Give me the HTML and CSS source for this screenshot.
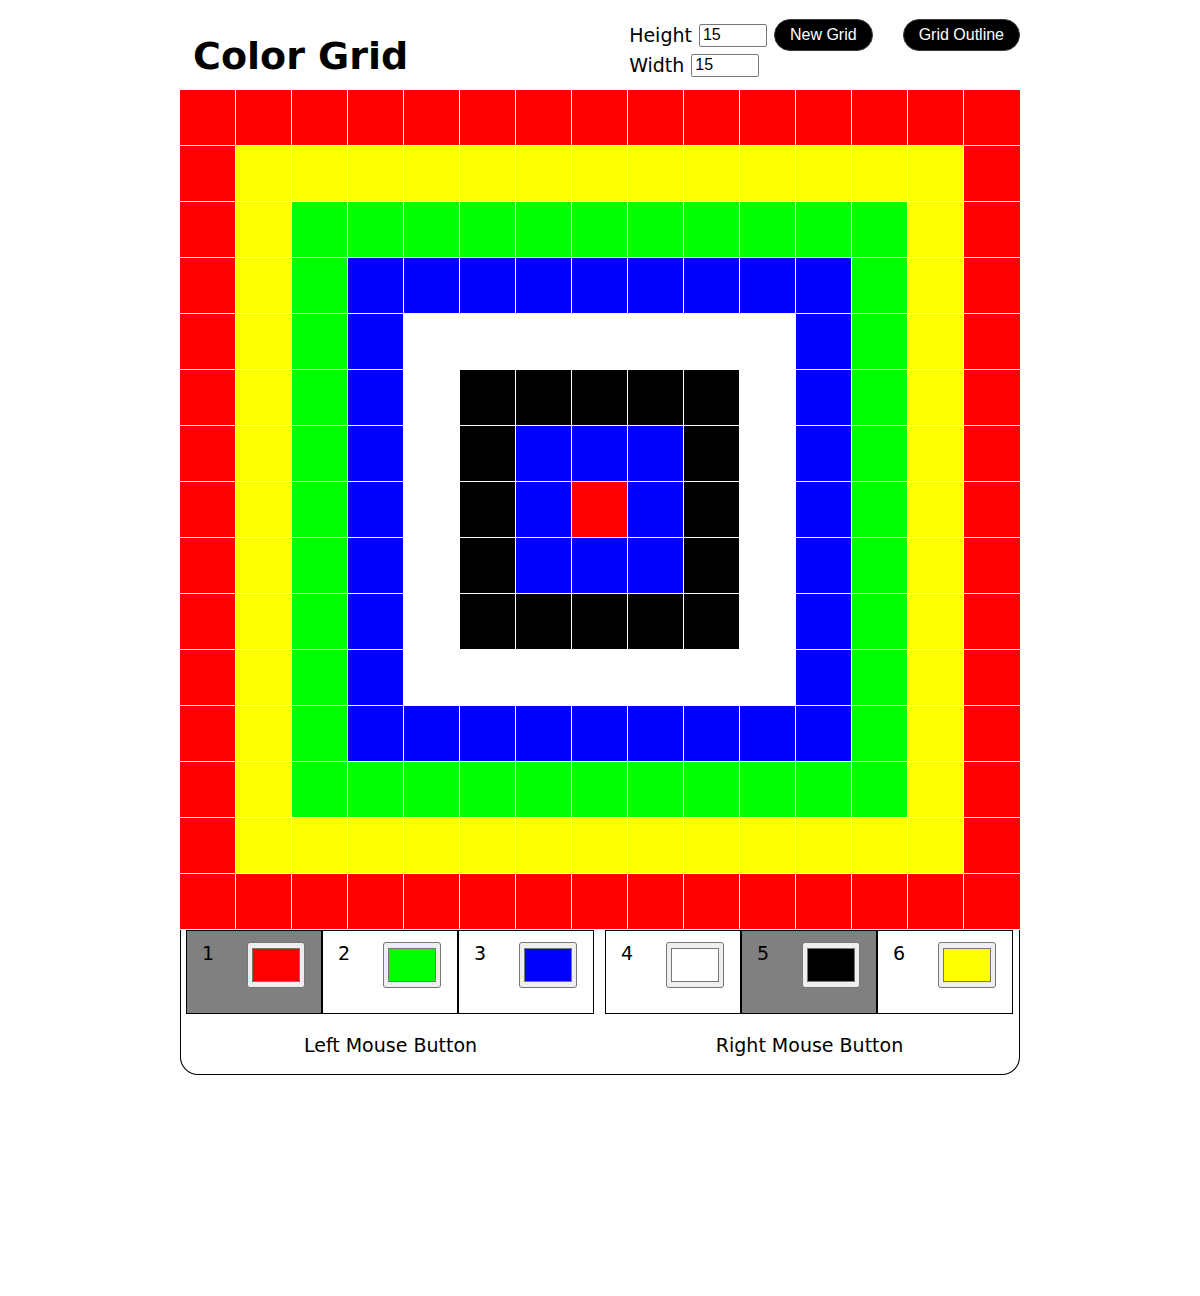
FILE: index.html
```html
<!DOCTYPE html>
<html lang="en">
<head>
<meta charset="utf-8">
<title>Color Grid</title>
<link rel="stylesheet" href="styles.css">
</head>
<body>
<div class="app">
  <header class="header">
    <h1 class="title">Color Grid</h1>
    <div class="controls">
      <div class="control-row">
        <label class="control-label" for="h">Height</label>
        <input class="num-input" id="h" type="text" value="15">
        <button class="pill-btn new-grid" type="button">New Grid</button>
      </div>
      <div class="control-row row-2">
        <label class="control-label" for="w">Width</label>
        <input class="num-input" id="w" type="text" value="15">
      </div>
    </div>
    <button class="pill-btn outline-btn" type="button">Grid Outline</button>
  </header>

  <div class="grid">
    <span class="r"></span><span class="r"></span><span class="r"></span><span class="r"></span><span class="r"></span><span class="r"></span><span class="r"></span><span class="r"></span><span class="r"></span><span class="r"></span><span class="r"></span><span class="r"></span><span class="r"></span><span class="r"></span><span class="r"></span>
    <span class="r"></span><span class="y"></span><span class="y"></span><span class="y"></span><span class="y"></span><span class="y"></span><span class="y"></span><span class="y"></span><span class="y"></span><span class="y"></span><span class="y"></span><span class="y"></span><span class="y"></span><span class="y"></span><span class="r"></span>
    <span class="r"></span><span class="y"></span><span class="g"></span><span class="g"></span><span class="g"></span><span class="g"></span><span class="g"></span><span class="g"></span><span class="g"></span><span class="g"></span><span class="g"></span><span class="g"></span><span class="g"></span><span class="y"></span><span class="r"></span>
    <span class="r"></span><span class="y"></span><span class="g"></span><span class="b"></span><span class="b"></span><span class="b"></span><span class="b"></span><span class="b"></span><span class="b"></span><span class="b"></span><span class="b"></span><span class="b"></span><span class="g"></span><span class="y"></span><span class="r"></span>
    <span class="r"></span><span class="y"></span><span class="g"></span><span class="b"></span><span class="w"></span><span class="w"></span><span class="w"></span><span class="w"></span><span class="w"></span><span class="w"></span><span class="w"></span><span class="b"></span><span class="g"></span><span class="y"></span><span class="r"></span>
    <span class="r"></span><span class="y"></span><span class="g"></span><span class="b"></span><span class="w"></span><span class="k"></span><span class="k"></span><span class="k"></span><span class="k"></span><span class="k"></span><span class="w"></span><span class="b"></span><span class="g"></span><span class="y"></span><span class="r"></span>
    <span class="r"></span><span class="y"></span><span class="g"></span><span class="b"></span><span class="w"></span><span class="k"></span><span class="b"></span><span class="b"></span><span class="b"></span><span class="k"></span><span class="w"></span><span class="b"></span><span class="g"></span><span class="y"></span><span class="r"></span>
    <span class="r"></span><span class="y"></span><span class="g"></span><span class="b"></span><span class="w"></span><span class="k"></span><span class="b"></span><span class="r"></span><span class="b"></span><span class="k"></span><span class="w"></span><span class="b"></span><span class="g"></span><span class="y"></span><span class="r"></span>
    <span class="r"></span><span class="y"></span><span class="g"></span><span class="b"></span><span class="w"></span><span class="k"></span><span class="b"></span><span class="b"></span><span class="b"></span><span class="k"></span><span class="w"></span><span class="b"></span><span class="g"></span><span class="y"></span><span class="r"></span>
    <span class="r"></span><span class="y"></span><span class="g"></span><span class="b"></span><span class="w"></span><span class="k"></span><span class="k"></span><span class="k"></span><span class="k"></span><span class="k"></span><span class="w"></span><span class="b"></span><span class="g"></span><span class="y"></span><span class="r"></span>
    <span class="r"></span><span class="y"></span><span class="g"></span><span class="b"></span><span class="w"></span><span class="w"></span><span class="w"></span><span class="w"></span><span class="w"></span><span class="w"></span><span class="w"></span><span class="b"></span><span class="g"></span><span class="y"></span><span class="r"></span>
    <span class="r"></span><span class="y"></span><span class="g"></span><span class="b"></span><span class="b"></span><span class="b"></span><span class="b"></span><span class="b"></span><span class="b"></span><span class="b"></span><span class="b"></span><span class="b"></span><span class="g"></span><span class="y"></span><span class="r"></span>
    <span class="r"></span><span class="y"></span><span class="g"></span><span class="g"></span><span class="g"></span><span class="g"></span><span class="g"></span><span class="g"></span><span class="g"></span><span class="g"></span><span class="g"></span><span class="g"></span><span class="g"></span><span class="y"></span><span class="r"></span>
    <span class="r"></span><span class="y"></span><span class="y"></span><span class="y"></span><span class="y"></span><span class="y"></span><span class="y"></span><span class="y"></span><span class="y"></span><span class="y"></span><span class="y"></span><span class="y"></span><span class="y"></span><span class="y"></span><span class="r"></span>
    <span class="r"></span><span class="r"></span><span class="r"></span><span class="r"></span><span class="r"></span><span class="r"></span><span class="r"></span><span class="r"></span><span class="r"></span><span class="r"></span><span class="r"></span><span class="r"></span><span class="r"></span><span class="r"></span><span class="r"></span>
  </div>

  <div class="palette">
    <div class="half">
      <div class="group">
        <div class="pcell selected"><span class="pnum">1</span><div class="swatch"><div class="chip r"></div></div></div>
        <div class="pcell"><span class="pnum">2</span><div class="swatch"><div class="chip g"></div></div></div>
        <div class="pcell"><span class="pnum">3</span><div class="swatch"><div class="chip b"></div></div></div>
      </div>
      <div class="mouse-label">Left Mouse Button</div>
    </div>
    <div class="half">
      <div class="group">
        <div class="pcell"><span class="pnum">4</span><div class="swatch"><div class="chip w"></div></div></div>
        <div class="pcell selected"><span class="pnum">5</span><div class="swatch"><div class="chip k"></div></div></div>
        <div class="pcell"><span class="pnum">6</span><div class="swatch"><div class="chip y"></div></div></div>
      </div>
      <div class="mouse-label">Right Mouse Button</div>
    </div>
  </div>
</div>
</body>
</html>
```

FILE: styles.css
```css
html, body {
  margin: 0;
  padding: 0;
  background: #ffffff;
}

body {
  font-family: "DejaVu Sans", Verdana, sans-serif;
  color: #000000;
}

.app {
  width: 840px;
  margin: 0 auto;
}

/* Header */
.header {
  display: flex;
  align-items: flex-start;
  height: 90px;
}

.title {
  flex: 1;
  margin: 34px 0 0 0;
  padding-left: 13px;
  font-family: "DejaVu Sans", Verdana, sans-serif;
  font-weight: bold;
  font-size: 38px;
  line-height: 44px;
}

.controls {
  display: flex;
  flex-direction: column;
  margin-top: 19px;
}

.control-row {
  display: flex;
  align-items: center;
  height: 32px;
}

.control-row.row-2 {
  height: 24px;
  margin-top: 2px;
}

.control-label {
  font-size: 19px;
  line-height: 22px;
  margin-right: 7px;
}

.num-input {
  box-sizing: border-box;
  width: 68px;
  height: 23px;
  margin: 0;
  padding: 0 0 0 3px;
  border: 1px solid #767676;
  border-radius: 2px;
  font-family: "Liberation Sans", Arial, sans-serif;
  font-size: 16px;
  color: #000000;
  background: #ffffff;
}

.pill-btn {
  box-sizing: border-box;
  height: 32px;
  margin: 0;
  padding: 0 15px;
  border: 1px solid #3c3c3c;
  border-radius: 16px;
  background: #000000;
  color: #ffffff;
  font-family: "Liberation Sans", Arial, sans-serif;
  font-size: 16px;
  line-height: 30px;
  white-space: nowrap;
}

.new-grid {
  margin-left: 7px;
}

.outline-btn {
  margin-top: 19px;
  margin-left: 30px;
}

/* Grid */
.grid {
  display: grid;
  grid-template-columns: repeat(14, 55px) 56px;
  grid-auto-rows: 55px;
  gap: 1px;
  background: #ffffff;
  width: 840px;
}

.grid > span {
  display: block;
}

.r { background: #ff0000; }
.y { background: #ffff00; }
.g { background: #00ff00; }
.b { background: #0000ff; }
.w { background: #ffffff; }
.k { background: #000000; }

/* Palette */
.palette {
  box-sizing: border-box;
  width: 840px;
  margin-top: 1px;
  display: flex;
  border: 1px solid #000000;
  border-top: none;
  border-radius: 0 0 18px 18px;
}

.half {
  flex: 1;
  display: flex;
  flex-direction: column;
  align-items: center;
  padding-bottom: 18px;
}

.group {
  display: flex;
  margin-left: -1px;
}

.pcell {
  box-sizing: border-box;
  width: 136px;
  height: 84px;
  border: 1px solid #000000;
  padding: 11px 16px 0 15px;
  display: flex;
  justify-content: space-between;
  align-items: flex-start;
  background: #ffffff;
}

.pcell.selected {
  background: #808080;
}

.pnum {
  font-size: 19px;
  line-height: 22px;
}

.swatch {
  box-sizing: border-box;
  flex: 0 0 58px;
  width: 58px;
  height: 46px;
  border: 1px solid #767676;
  border-radius: 3px;
  background: #efefef;
  padding: 5px 4px;
}

.chip {
  box-sizing: border-box;
  width: 100%;
  height: 100%;
  border: 1px solid #777777;
}

.mouse-label {
  margin-top: 20px;
  font-size: 19px;
  line-height: 22px;
}
```
